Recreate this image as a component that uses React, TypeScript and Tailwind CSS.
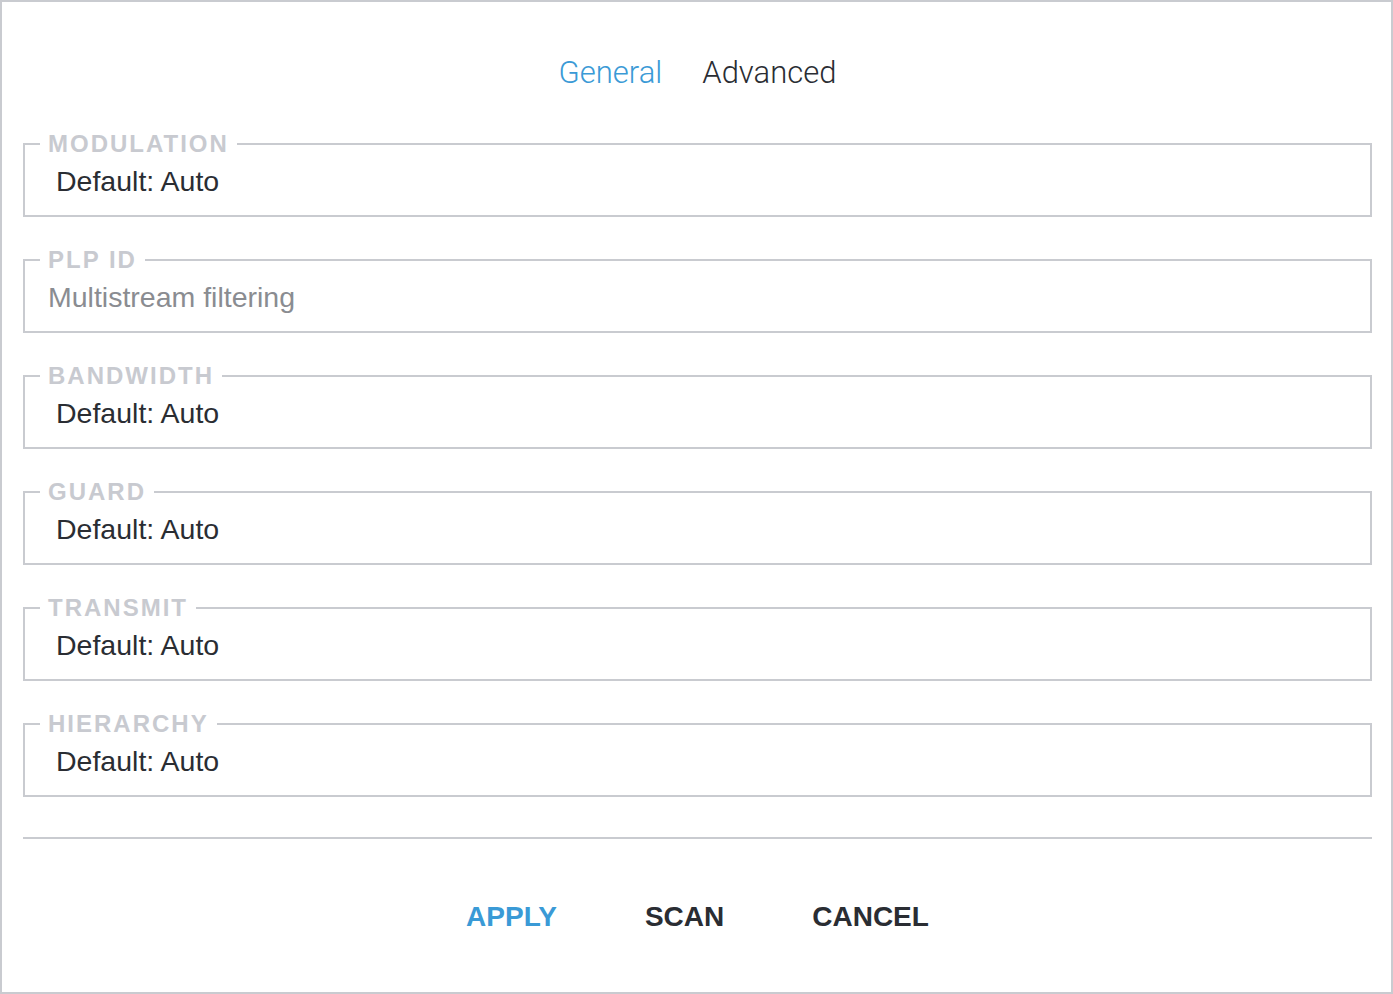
export default function App() {
    const fields = [
        { label: "MODULATION", value: "Default: Auto" },
        { label: "PLP ID", value: "", placeholder: "Multistream filtering" },
        { label: "BANDWIDTH", value: "Default: Auto" },
        { label: "GUARD", value: "Default: Auto" },
        { label: "TRANSMIT", value: "Default: Auto" },
        { label: "HIERARCHY", value: "Default: Auto" },
    ];

    return (
        <div
            className="box-border flex h-[994px] w-[1393px] flex-col border-2 border-[#c9cbd0] bg-white pl-[21px] pr-[19px] pt-[53px]"
            style={{ fontFamily: '"Liberation Sans", Arial, sans-serif' }}
        >
            {/* Tabs */}
            <div className="flex justify-center gap-[40px] text-[31px] leading-[36px]">
                <button className="font-light text-[#3a9ad6]" style={{ fontFamily: 'Roboto, "Liberation Sans", sans-serif' }}>General</button>
                <button className="font-light text-[#2a2d33]" style={{ fontFamily: 'Roboto, "Liberation Sans", sans-serif' }}>Advanced</button>
            </div>

            {/* Fields */}
            <div className="mt-[41px] flex flex-col gap-[31px]">
                {fields.map((f) => (
                    <fieldset key={f.label} className="m-0 border-2 border-[#c9cbd0] px-[15px] pb-[18px] pt-0">
                        <legend className="px-[8px] text-[24px] font-bold leading-[23px] tracking-[2px] text-[#c8cad0]">
                            {f.label}
                        </legend>
                        <div className="mt-[10px] h-[32px] text-[28.5px] leading-[32px]">
                            {f.value ? (
                                <span className="pl-[16px] text-[#2a2d33]">{f.value}</span>
                            ) : (
                                <span className="pl-[8px] text-[#8a8c91]">{f.placeholder}</span>
                            )}
                        </div>
                    </fieldset>
                ))}
            </div>

            <div className="mt-[40px] h-[2px] bg-[#c9cbd0]" />

            {/* Actions */}
            <div className="mt-[62px] flex justify-center gap-[88px] text-[28px] font-bold leading-[32px]">
                <button className="text-[#3a9ad6]">APPLY</button>
                <button className="text-[#2a2d33]">SCAN</button>
                <button className="text-[#2a2d33]">CANCEL</button>
            </div>
        </div>
    );
}
